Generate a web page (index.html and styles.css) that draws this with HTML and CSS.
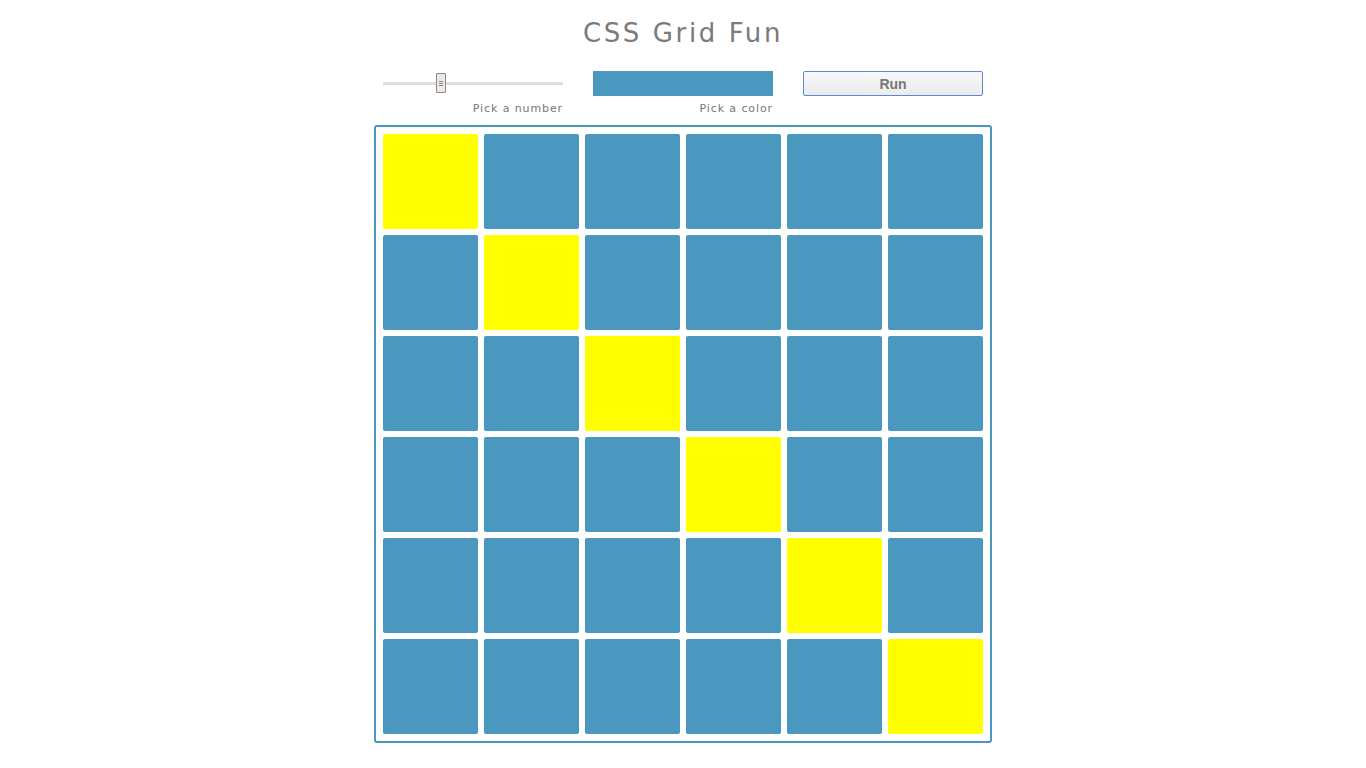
FILE: index.html
```html
<!DOCTYPE html>
<html lang="en">
<head>
    <meta charset="UTF-8">
    <meta name="viewport" content="width=device-width, initial-scale=1.0">
    <title>CSS Grid Fun</title>
    <link rel="stylesheet" href="styles.css">
</head>
<body>
    <div class="wrapper">
        <h1>CSS Grid Fun</h1>
        <div class="controls">
            <div class="control">
                <input type="range" id="number" min="0" max="100" value="31">
                <label for="number">Pick a number</label>
            </div>
            <div class="control">
                <div class="swatch" id="color"></div>
                <label for="color">Pick a color</label>
            </div>
            <div class="control">
                <button type="button">Run</button>
            </div>
        </div>
        <div class="grid">
            <div class="cell hit"></div><div class="cell"></div><div class="cell"></div><div class="cell"></div><div class="cell"></div><div class="cell"></div>
            <div class="cell"></div><div class="cell hit"></div><div class="cell"></div><div class="cell"></div><div class="cell"></div><div class="cell"></div>
            <div class="cell"></div><div class="cell"></div><div class="cell hit"></div><div class="cell"></div><div class="cell"></div><div class="cell"></div>
            <div class="cell"></div><div class="cell"></div><div class="cell"></div><div class="cell hit"></div><div class="cell"></div><div class="cell"></div>
            <div class="cell"></div><div class="cell"></div><div class="cell"></div><div class="cell"></div><div class="cell hit"></div><div class="cell"></div>
            <div class="cell"></div><div class="cell"></div><div class="cell"></div><div class="cell"></div><div class="cell"></div><div class="cell hit"></div>
        </div>
    </div>
</body>
</html>
```

FILE: styles.css
```css
body {
    margin: 0;
    background: #fff;
    font-family: "DejaVu Sans", sans-serif;
    color: #777;
}
.wrapper {
    width: 618px;
    margin: 0 auto;
    padding-top: 17px;
}
h1 {
    margin: 0;
    text-align: center;
    font-weight: normal;
    font-size: 26px;
    line-height: 32px;
    letter-spacing: 2.6px;
    color: #7a7a7a;
}
.controls {
    display: grid;
    grid-template-columns: repeat(3, 180px);
    gap: 30px;
    padding: 0 9px;
    margin-top: 22px;
    height: 54px;
}
.control {
    display: flex;
    flex-direction: column;
}
.control label {
    text-align: right;
    font-size: 11px;
    line-height: 14px;
    letter-spacing: 0.9px;
    margin-top: 6px;
    color: #777;
}
input[type=range] {
    -webkit-appearance: none;
    appearance: none;
    width: 180px;
    height: 25px;
    margin: 0;
    background: transparent;
}
input[type=range]::-webkit-slider-runnable-track {
    height: 3px;
    background: #e2ded9;
}
input[type=range]::-webkit-slider-thumb {
    -webkit-appearance: none;
    width: 10px;
    height: 20px;
    margin-top: -9px;
    box-sizing: border-box;
    border: 1px solid #8c8984;
    border-radius: 1px;
    background:
        linear-gradient(#8c8984, #8c8984) center 7px / 4px 1px no-repeat,
        linear-gradient(#8c8984, #8c8984) center 9px / 4px 1px no-repeat,
        linear-gradient(#8c8984, #8c8984) center 11px / 4px 1px no-repeat,
        #ece9e5;
}
.swatch {
    height: 25px;
    background: #4a97bf;
}
button {
    height: 25px;
    width: 180px;
    padding: 0;
    border: 1px solid #5a87d8;
    border-radius: 2px;
    background: linear-gradient(#f8f8f8, #ebebeb);
    color: #777;
    font-family: "Liberation Sans", Arial, sans-serif;
    font-weight: bold;
    font-size: 14px;
}
.grid {
    display: grid;
    grid-template-columns: repeat(6, 95px);
    grid-auto-rows: 95px;
    gap: 6px;
    padding: 7px;
    border: 2px solid #4a97bf;
    border-radius: 3px;
}
.cell {
    background: #4a97bf;
    border-radius: 2px;
}
.cell.hit {
    background: #ffff00;
}
```
